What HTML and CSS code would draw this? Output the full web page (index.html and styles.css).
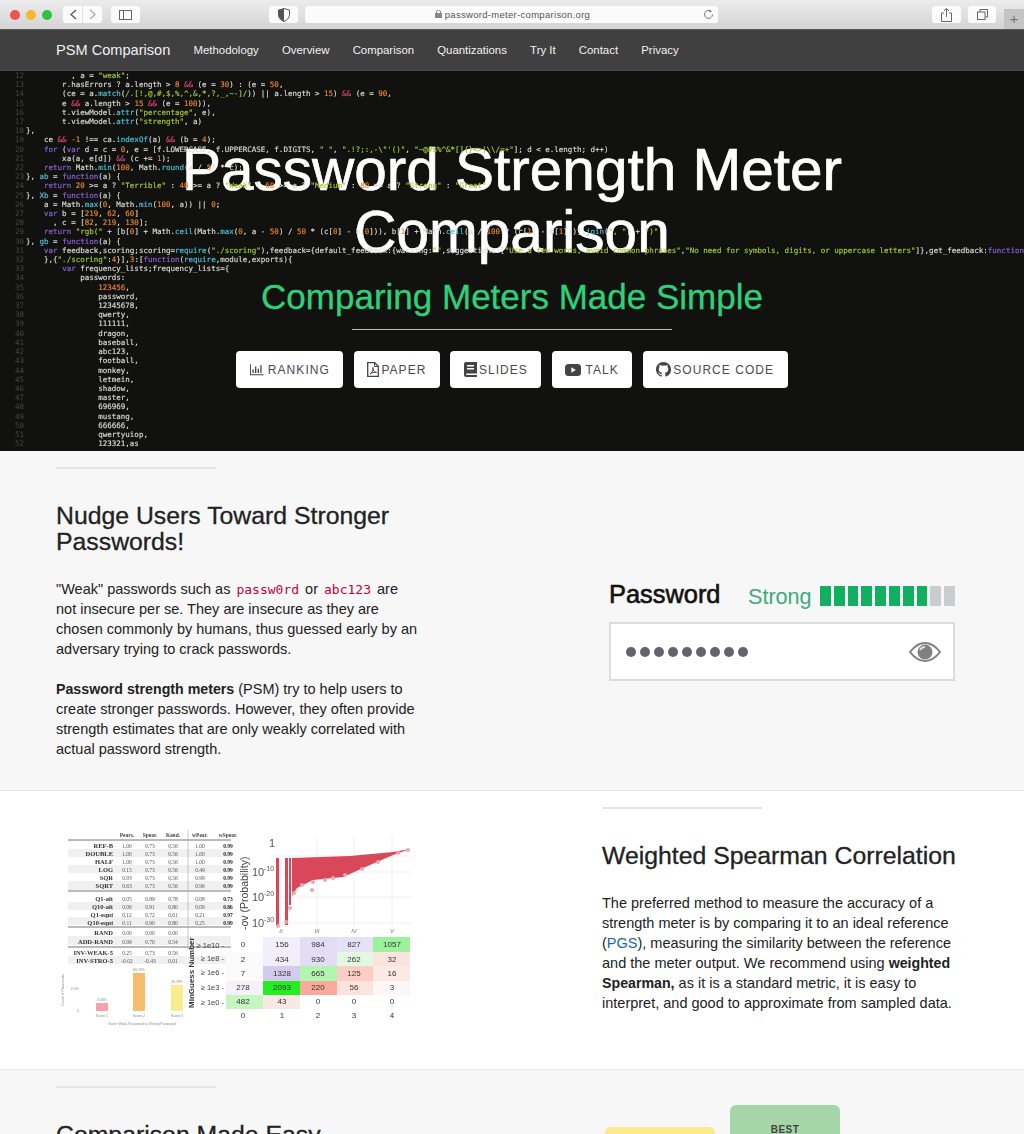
FILE: index.html
```html
<!DOCTYPE html>
<html lang="en">
<head>
    <meta charset="UTF-8">
    <meta name="viewport" content="width=device-width, initial-scale=1.0">
    <title>Password Strength Meter Comparison</title>
    <link rel="stylesheet" href="styles.css">
</head>
<body>

<!-- browser window bar -->
<div class="browser-bar">
    <div class="lights">
        <span class="light light-red"></span>
        <span class="light light-yellow"></span>
        <span class="light light-green"></span>
    </div>
    <div class="tool-btn tool-pair">
        <svg width="39" height="17" viewBox="0 0 39 17"><path d="M13 4l-5 4.500 5 4.500" fill="none" stroke="#555" stroke-width="1.300"/><path d="M27 4l5 4.500-5 4.500" fill="none" stroke="#aaa" stroke-width="1.300"/><path d="M19.500 0v17" stroke="#e2e2e2"/></svg>
    </div>
    <div class="tool-btn tool-side">
        <svg width="13" height="10" viewBox="0 0 13 10"><rect x=".5" y=".5" width="12" height="9" fill="none" stroke="#666"/><path d="M4.500 0v10" stroke="#666"/></svg>
    </div>
    <div class="tool-btn tool-shield">
        <svg width="12" height="14" viewBox="0 0 12 14"><path d="M6 .5l5.500 1.600v4.600c0 3.200-2.400 5.500-5.500 6.800C2.900 12.200.5 9.900.5 6.700V2.100z" fill="#fff" stroke="#555"/><path d="M6 .5v13C2.900 12.200.5 9.900.5 6.700V2.100z" fill="#555"/></svg>
    </div>
    <div class="address">
        <span class="address-text">
            <svg width="7" height="8" viewBox="0 0 7 8"><rect y="3" width="7" height="5" fill="#888"/><path d="M1.500 3V2a2 2 0 014 0v1" fill="none" stroke="#888"/></svg>
            password-meter-comparison.org
        </span>
        <svg class="reload" width="11" height="11" viewBox="0 0 11 11"><path d="M9.500 5.500a4 4 0 11-1.300-3" fill="none" stroke="#777" stroke-width="1"/><path d="M6.500 .5l2.500 2-2.800 1z" fill="#777"/></svg>
    </div>
    <div class="tool-btn tool-share">
        <svg width="11" height="14" viewBox="0 0 11 14"><path d="M3 5H.5v8.500h10V5H8" fill="none" stroke="#666"/><path d="M5.500 9V1M3 3l2.500-2.500L8 3" fill="none" stroke="#666"/></svg>
    </div>
    <div class="tool-btn tool-tabs">
        <svg width="11" height="11" viewBox="0 0 11 11"><rect x=".5" y="3" width="7.500" height="7.500" fill="none" stroke="#666"/><path d="M3 3V.5h7.500V8H8" fill="none" stroke="#666"/></svg>
    </div>
    <div class="new-tab">+</div>
</div>

<nav class="site-nav">
    <a href="#" class="brand">PSM Comparison</a>
    <a href="#">Methodology</a>
    <a href="#">Overview</a>
    <a href="#">Comparison</a>
    <a href="#">Quantizations</a>
    <a href="#">Try It</a>
    <a href="#">Contact</a>
    <a href="#">Privacy</a>
</nav>

<header class="hero">
    <div class="hero-code">
<pre class="gutter">12
13
14
15
16
17
18
19
20
21
22
23
24
25
26
27
28
29
30
31
32
33
34
35
36
37
38
39
40
41
42
43
44
45
46
47
48
49
50
51
52</pre>
<pre class="code">          , a = <i>"weak"</i>;
        r.hasErrors ? a.length &gt; <b>8</b> <u>&amp;&amp;</u> (e = <b>30</b>) : (e = <b>50</b>,
        (ce = a.<em>match</em>(<i>/.[!,@,#,$,%,^,&amp;,*,?,_,~-]/</i>)) || a.length &gt; <b>15</b>) <u>&amp;&amp;</u> (e = <b>90</b>,
        e <u>&amp;&amp;</u> a.length &gt; <b>15</b> <u>&amp;&amp;</u> (e = <b>100</b>)),
        t.viewModel.<em>attr</em>(<i>"percentage"</i>, e),
        t.viewModel.<em>attr</em>(<i>"strength"</i>, a)
},
    ce <u>&amp;&amp;</u> <b>-1</b> !== ca.<em>indexOf</em>(a) <u>&amp;&amp;</u> (b = <b>4</b>);
    <s>for</s> (<s>var</s> d = c = <b>0</b>, e = [f.LOWERCASE, f.UPPERCASE, f.DIGITS, <i>" "</i>, <i>".!?;:,-\"'()"</i>, <i>"~@#$%^&amp;*[]{}&lt;&gt;|\\/=+"</i>]; d &lt; e.length; d++)
        xa(a, e[d]) <u>&amp;&amp;</u> (c += <b>1</b>);
    <s>return</s> Math.<em>min</em>(<b>100</b>, Math.<em>round</em>(a / <b>5</b>) * c);
}, <em>ab</em> = <s>function</s>(a) {
    <s>return</s> <b>20</b> &gt;= a ? <i>"Terrible"</i> : <b>40</b> &gt;= a ? <i>"Weak"</i> : <b>60</b> &gt;= a ? <i>"Medium"</i> : <b>80</b> &gt;= a ? <i>"Strong"</i> : <i>"Great"</i>
}, <em>Xb</em> = <s>function</s>(a) {
    a = Math.<em>max</em>(<b>0</b>, Math.<em>min</em>(<b>100</b>, a)) || <b>0</b>;
    <s>var</s> b = [<b>219</b>, <b>62</b>, <b>60</b>]
      , c = [<b>82</b>, <b>219</b>, <b>130</b>];
    <s>return</s> <i>"rgb("</i> + [b[<b>0</b>] + Math.<em>ceil</em>(Math.<em>max</em>(<b>0</b>, a - <b>50</b>) / <b>50</b> * (c[<b>0</b>] - b[<b>0</b>])), b[<b>1</b>] + Math.<em>ceil</em>(a / <b>100</b> * (c[<b>1</b>] - b[<b>1</b>]))].<em>join</em>(<i>", "</i>) + <i>")"</i>
}, <em>gb</em> = <s>function</s>(a) {
    <s>var</s> feedback,scoring;scoring=<em>require</em>(<i>"./scoring"</i>),feedback={default_feedback:{warning:<i>""</i>,suggestions:[<i>"Use a few words, avoid common phrases"</i>,<i>"No need for symbols, digits, or uppercase letters"</i>]},get_feedback:<s>function</s>
    },{<i>"./scoring"</i>:<b>4</b>}],<b>3</b>:[<s>function</s>(<em>require</em>,module,exports){
        <s>var</s> frequency_lists;frequency_lists={
            passwords:
                <b>123456</b>,
                password,
                12345678,
                qwerty,
                111111,
                dragon,
                baseball,
                abc123,
                football,
                monkey,
                letmein,
                shadow,
                master,
                696969,
                mustang,
                666666,
                qwertyuiop,
                123321,as</pre>
    </div>
    <div class="hero-body">
        <h1>Password Strength Meter Comparison</h1>
        <p class="hero-sub">Comparing Meters Made Simple</p>
        <hr class="hero-rule">
        <div class="hero-buttons">
            <a href="#" class="btn">
                <svg width="14" height="13" viewBox="0 0 16 14"><path d="M.5 1v12h15" fill="none" stroke="#444" stroke-width="1.200"/><path d="M3.500 7v4M6.500 3.500V11M9.500 6v5M12.500 2v9" fill="none" stroke="#444" stroke-width="1.500"/></svg>
                Ranking
            </a>
            <a href="#" class="btn btn-tight">
                <svg width="12" height="15" viewBox="0 0 12 15"><path d="M.7.7h7l3.600 3.600v10H.7z" fill="none" stroke="#444" stroke-width="1.300"/><path d="M7.500.7v3.800h3.800" fill="none" stroke="#444"/><path d="M3 12c2-1 3.500-4 3-6.500C5.500 8 7 10.500 9.500 10.500 7 10 4.500 10.500 3 12z" fill="none" stroke="#444"/></svg>
                Paper
            </a>
            <a href="#" class="btn btn-tight">
                <svg width="13" height="15" viewBox="0 0 13 15"><path d="M2 0h11v11.500H2.500a1 1 0 000 1.500H13v2H2a2 2 0 01-2-2V2a2 2 0 012-2z" fill="#444"/><rect x="3" y="3" width="7" height="1.500" fill="#fff"/><rect x="3" y="6" width="7" height="1.500" fill="#fff"/></svg>
                Slides
            </a>
            <a href="#" class="btn">
                <svg width="16" height="12" viewBox="0 0 16 12"><rect width="16" height="12" rx="3.500" fill="#444"/><path d="M6.300 3.300v5.400L10.800 6z" fill="#fff"/></svg>
                Talk
            </a>
            <a href="#" class="btn btn-tight">
                <svg width="15" height="15" viewBox="0 0 16 16"><path fill="#444" d="M8 0C3.580 0 0 3.580 0 8c0 3.540 2.290 6.530 5.470 7.590.4.070.55-.17.55-.38 0-.19-.01-.82-.01-1.490-2.010.37-2.530-.49-2.690-.94-.09-.23-.48-.94-.82-1.130-.28-.15-.68-.52-.01-.53.63-.01 1.080.58 1.230.82.72 1.210 1.870.87 2.330.66.07-.52.28-.87.51-1.070-1.780-.2-3.640-.89-3.640-3.950 0-.87.31-1.590.82-2.150-.08-.2-.36-1.020.08-2.120 0 0 .67-.21 2.200.82.64-.18 1.320-.27 2-.27.68 0 1.360.09 2 .27 1.530-1.040 2.200-.82 2.200-.82.44 1.100.16 1.920.08 2.120.51.56.82 1.270.82 2.150 0 3.070-1.870 3.750-3.650 3.950.29.25.54.73.54 1.480 0 1.070-.01 1.930-.01 2.200 0 .21.15.46.55.38A8.013 8.013 0 0016 8c0-4.420-3.580-8-8-8z"/></svg>
                Source Code
            </a>
        </div>
    </div>
</header>

<section class="band band-grey band-first">
    <div class="text-col">
        <hr class="short-rule">
        <h2>Nudge Users Toward Stronger Passwords!</h2>
        <p>"Weak" passwords such as <code>passw0rd</code> or <code>abc123</code> are not insecure per se. They are insecure as they are chosen commonly by humans, thus guessed early by an adversary trying to crack passwords.</p>
        <p><strong>Password strength meters</strong> (PSM) try to help users to create stronger passwords. However, they often provide strength estimates that are only weakly correlated with actual password strength.</p>
    </div>
    <div class="meter-demo">
        <div class="meter-head">
            <span class="meter-label">Password</span>
            <span class="meter-word">Strong</span>
            <span class="meter-bars">
                <i class="on"></i><i class="on"></i><i class="on"></i><i class="on"></i><i class="on"></i><i class="on"></i><i class="on"></i><i class="on"></i><i></i><i></i>
            </span>
        </div>
        <div class="meter-input">
            <span class="dots"><i></i><i></i><i></i><i></i><i></i><i></i><i></i><i></i><i></i></span>
            <svg width="32" height="20" viewBox="0 0 32 20"><path d="M1 10C6 3.500 11 1 16 1s10 2.500 15 9c-5 6.500-10 9-15 9S6 16.500 1 10z" fill="none" stroke="#808080" stroke-width="2"/><circle cx="16" cy="10" r="7.500" fill="#808080"/><path d="M11 8a5.500 5.500 0 015-3" fill="none" stroke="#ddd" stroke-width="1.800"/></svg>
        </div>
    </div>
</section>

<section class="band band-white">
    <div class="figure-col">
        <svg class="figure" width="364" height="205" viewBox="56 825 364 205">
            <!-- metric table -->
            <g class="fig-bands">
                <rect x="68" y="849" width="163" height="8"/>
                <rect x="68" y="865" width="163" height="8"/>
                <rect x="68" y="881" width="163" height="9"/>
                <rect x="68" y="902" width="163" height="8"/>
                <rect x="68" y="917" width="163" height="8"/>
                <rect x="68" y="936" width="163" height="9"/>
                <rect x="68" y="956" width="163" height="8"/>
            </g>
            <path class="fig-rule" d="M68 840H231M68 891H231M68 927H231M68 947H231"/>
            <path class="fig-rule-thin" d="M188 830V950"/>
            <g class="fig-head">
                <text x="127" y="837">Pears.</text><text x="150" y="837">Spear.</text><text x="173" y="837">Kend.</text><text x="200" y="837">wPear.</text><text x="228" y="837">wSpear.</text>
            </g>
            <g class="fig-names">
                <text x="113" y="848">REF-B</text><text x="113" y="856">DOUBLE</text><text x="113" y="864">HALF</text><text x="113" y="872">LOG</text><text x="113" y="880">SQR</text><text x="113" y="888">SQRT</text>
                <text x="113" y="901">Q1-alt</text><text x="113" y="909">Q10-alt</text><text x="113" y="917">Q1-equi</text><text x="113" y="925">Q10-equi</text>
                <text x="113" y="935">RAND</text><text x="113" y="944">ADD-RAND</text>
                <text x="113" y="955">INV-WEAK-5</text><text x="113" y="963">INV-STRO-5</text>
            </g>
            <g class="fig-nums">
                <text x="127" y="848">1.00</text><text x="150" y="848">0.73</text><text x="173" y="848">0.56</text><text x="200" y="848">1.00</text><text x="228" y="848" class="fig-strong">0.99</text>
                <text x="127" y="856">1.00</text><text x="150" y="856">0.73</text><text x="173" y="856">0.56</text><text x="200" y="856">1.00</text><text x="228" y="856" class="fig-strong">0.99</text>
                <text x="127" y="864">1.00</text><text x="150" y="864">0.73</text><text x="173" y="864">0.56</text><text x="200" y="864">1.00</text><text x="228" y="864" class="fig-strong">0.99</text>
                <text x="127" y="872">0.15</text><text x="150" y="872">0.73</text><text x="173" y="872">0.56</text><text x="200" y="872">0.49</text><text x="228" y="872" class="fig-strong">0.99</text>
                <text x="127" y="880">0.93</text><text x="150" y="880">0.73</text><text x="173" y="880">0.56</text><text x="200" y="880">0.99</text><text x="228" y="880" class="fig-strong">0.99</text>
                <text x="127" y="888">0.63</text><text x="150" y="888">0.73</text><text x="173" y="888">0.56</text><text x="200" y="888">0.96</text><text x="228" y="888" class="fig-strong">0.99</text>
                <text x="127" y="901">0.05</text><text x="150" y="901">0.89</text><text x="173" y="901">0.78</text><text x="200" y="901">0.08</text><text x="228" y="901" class="fig-strong">0.73</text>
                <text x="127" y="909">0.06</text><text x="150" y="909">0.91</text><text x="173" y="909">0.80</text><text x="200" y="909">0.09</text><text x="228" y="909" class="fig-strong">0.86</text>
                <text x="127" y="917">0.12</text><text x="150" y="917">0.72</text><text x="173" y="917">0.61</text><text x="200" y="917">0.21</text><text x="228" y="917" class="fig-strong">0.97</text>
                <text x="127" y="925">0.11</text><text x="150" y="925">0.90</text><text x="173" y="925">0.80</text><text x="200" y="925">0.25</text><text x="228" y="925" class="fig-strong">0.99</text>
                <text x="127" y="935">0.00</text><text x="150" y="935">0.00</text><text x="173" y="935">0.00</text>
                <text x="127" y="944">0.99</text><text x="150" y="944">0.70</text><text x="173" y="944">0.54</text>
                <text x="127" y="955">0.25</text><text x="150" y="955">0.73</text><text x="173" y="955">0.56</text>
                <text x="127" y="963">-0.02</text><text x="150" y="963">-0.43</text><text x="173" y="963">0.01</text>
            </g>

            <!-- bars -->
            <g class="fig-tiny">
                <text x="64" y="990" transform="rotate(-90 64 990)">Count of Passwords</text>
                <text x="75" y="990">0.5%</text><text x="78" y="1012">0</text>
                <text x="102" y="1001">3.00%</text><text x="139" y="971">66.74%</text><text x="177" y="983">45.79%</text>
                <text x="102" y="1017">Score 1</text><text x="139" y="1017">Score 2</text><text x="177" y="1017">Score 3</text>
                <text x="142" y="1025">Score Weak Password vs Strong Password</text>
            </g>
            <rect x="96" y="1003" width="12" height="8" fill="#f4a3ad"/>
            <rect x="133" y="973" width="12" height="38" fill="#f6bd6f"/>
            <rect x="171" y="985" width="12" height="26" fill="#f9ec8c"/>

            <!-- scatter -->
            <path class="fig-grid" d="M276 856H412M276 872H412M276 897H412M276 923H412M317 836V928M354 836V928M392 836V928"/>
            <path d="M276 858h3v67h-3zM285 858h3v67h-3zM289 858h2v47h-2z" fill="#d9485a"/>
            <path d="M292 858L350 856 393 852 410 849 393 855 370 865 343 877 313 880 297 888 292 896z" fill="#d9485a"/>
            <g fill="#eba6af">
                <circle cx="294" cy="893" r="2"/><circle cx="302" cy="885" r="2"/><circle cx="313" cy="882" r="2"/><circle cx="312" cy="890" r="2"/><circle cx="325" cy="880" r="2"/><circle cx="333" cy="878" r="2"/><circle cx="345" cy="875" r="2"/><circle cx="362" cy="869" r="2"/><circle cx="378" cy="862" r="2"/><circle cx="398" cy="853" r="2"/><circle cx="408" cy="850" r="2"/><circle cx="290" cy="908" r="2"/><circle cx="286" cy="922" r="2"/><circle cx="278" cy="926" r="2"/>
            </g>
            <g class="fig-axis">
                <text x="269" y="847">1</text>
                <text x="252" y="876">10</text><text x="264" y="871" class="fig-exp">-10</text>
                <text x="252" y="901">10</text><text x="264" y="896" class="fig-exp">-20</text>
                <text x="252" y="927">10</text><text x="264" y="922" class="fig-exp">-30</text>
            </g>
            <text class="fig-axis-title" x="248" y="930" transform="rotate(-90 248 930)">-ov (Probability)</text>
            <g class="fig-roman">
                <text x="281" y="933">II</text><text x="317" y="933">III</text><text x="354" y="933">IV</text><text x="392" y="933">V</text>
            </g>

            <!-- heat map -->
            <g>
                <rect x="263" y="937" width="37" height="15" fill="#f3effa"/><rect x="300" y="937" width="37" height="15" fill="#e2dcf4"/><rect x="337" y="937" width="36" height="15" fill="#e6e1f6"/><rect x="373" y="937" width="37" height="15" fill="#9cf29c"/>
                <rect x="226" y="952" width="37" height="14" fill="#fbfbfb"/><rect x="263" y="952" width="37" height="14" fill="#f1edf9"/><rect x="300" y="952" width="37" height="14" fill="#e3ddf4"/><rect x="337" y="952" width="36" height="14" fill="#e2f8e0"/><rect x="373" y="952" width="37" height="14" fill="#fbe3de"/>
                <rect x="226" y="966" width="37" height="15" fill="#fbfbfb"/><rect x="263" y="966" width="37" height="15" fill="#d4caed"/><rect x="300" y="966" width="37" height="15" fill="#b2f5ae"/><rect x="337" y="966" width="36" height="15" fill="#fbcdc5"/><rect x="373" y="966" width="37" height="15" fill="#fbe9e6"/>
                <rect x="226" y="981" width="37" height="14" fill="#f4f1fa"/><rect x="263" y="981" width="37" height="14" fill="#22ee22"/><rect x="300" y="981" width="37" height="14" fill="#fba99d"/><rect x="337" y="981" width="36" height="14" fill="#fce3df"/><rect x="373" y="981" width="37" height="14" fill="#fdf6f5"/>
                <rect x="226" y="995" width="37" height="14" fill="#c5f6c0"/><rect x="263" y="995" width="37" height="14" fill="#fbe8e4"/>
            </g>
            <g class="fig-cells">
                <text x="243" y="947">0</text><text x="282" y="947">156</text><text x="318" y="947">984</text><text x="354" y="947">827</text><text x="392" y="947">1057</text>
                <text x="243" y="962">2</text><text x="282" y="962">434</text><text x="318" y="962">930</text><text x="354" y="962">262</text><text x="392" y="962">32</text>
                <text x="243" y="976">7</text><text x="282" y="976">1328</text><text x="318" y="976">665</text><text x="354" y="976">125</text><text x="392" y="976">16</text>
                <text x="243" y="990">278</text><text x="282" y="990">2093</text><text x="318" y="990">220</text><text x="354" y="990">56</text><text x="392" y="990">3</text>
                <text x="243" y="1004">482</text><text x="282" y="1004">43</text><text x="318" y="1004">0</text><text x="354" y="1004">0</text><text x="392" y="1004">0</text>
                <text x="243" y="1018">0</text><text x="282" y="1018">1</text><text x="318" y="1018">2</text><text x="354" y="1018">3</text><text x="392" y="1018">4</text>
            </g>
            <g class="fig-rows">
                <text x="224" y="948">≥ 1e10 -</text><text x="224" y="961">≥ 1e8 -</text><text x="224" y="975">≥ 1e6 -</text><text x="224" y="990">≥ 1e3 -</text><text x="224" y="1005">≥ 1e0 -</text>
            </g>
            <text class="fig-min" x="194" y="1008" transform="rotate(-90 194 1008)">MinGuess Number</text>
        </svg>
    </div>
    <div class="text-col">
        <hr class="short-rule">
        <h2>Weighted Spearman Correlation</h2>
        <p>The preferred method to measure the accuracy of a strength meter is by comparing it to an ideal reference (<a href="#">PGS</a>), measuring the similarity between the reference and the meter output. We recommend using <strong>weighted Spearman,</strong> as it is a standard metric, it is easy to interpret, and good to approximate from sampled data.</p>
    </div>
</section>

<section class="band band-grey band-last">
    <div class="text-col">
        <hr class="short-rule">
        <h2>Comparison Made Easy</h2>
    </div>
    <div class="rank-cards">
        <div class="rank-card rank-yellow"></div>
        <div class="rank-card rank-green">BEST</div>
    </div>
</section>

</body>
</html>
```

FILE: styles.css
```css
html, body {
    height: 1134px;
    overflow: hidden;
}

body {
    margin: 0;
    font-family: 'Liberation Sans', Arial, sans-serif;
    color: #222;
    background-color: #fff;
}

/* browser bar */
.browser-bar {
    height: 29px;
    display: flex;
    align-items: center;
    padding-left: 10px;
    background: linear-gradient(#ececec, #d4d4d4);
    border-bottom: 1px solid #5a5a5a;
}

.lights {
    display: flex;
    gap: 6px;
    width: 53px;
}

.light {
    width: 10px;
    height: 10px;
    border-radius: 50%;
}

.light-red { background-color: #ef5350; }
.light-yellow { background-color: #f4b92f; }
.light-green { background-color: #2fc141; }

.tool-btn {
    height: 17px;
    display: flex;
    align-items: center;
    justify-content: center;
    background-color: #fbfbfb;
    border-radius: 3px;
}

.tool-pair { width: 39px; }
.tool-side { width: 29px; margin-left: 9px; }
.tool-shield { width: 29px; margin-left: 129px; }
.tool-share { width: 29px; margin-left: 214px; }
.tool-tabs { width: 28px; margin-left: 7px; }

.address {
    width: 413px;
    height: 17px;
    margin-left: 7px;
    position: relative;
    display: flex;
    align-items: center;
    justify-content: center;
    background-color: #fbfbfb;
    border-radius: 3px;
    font-size: 9.500px;
    letter-spacing: 0.3px;
    color: #555;
}

.address-text {
    margin-left: 2px;
}

.reload {
    position: absolute;
    right: 4px;
    top: 3px;
}

.new-tab {
    width: 20px;
    height: 20px;
    margin-left: 8px;
    background-color: #c4c4c4;
    color: #777;
    font-size: 15px;
    line-height: 20px;
    text-align: center;
    align-self: flex-end;
}

/* nav */
.site-nav {
    height: 40px;
    display: flex;
    align-items: center;
    gap: 23.200px;
    padding-left: 56px;
    background-color: #404040;
    border-bottom: 1px solid #4b4b46;
}

.site-nav a {
    color: #f0f0f0;
    text-decoration: none;
    font-size: 11.400px;
}

.site-nav .brand {
    font-size: 14.600px;
}

/* hero */
.hero {
    height: 380px;
    display: grid;
    background-color: #11110f;
    overflow: hidden;
}

.hero-code,
.hero-body {
    grid-area: 1 / 1;
    min-width: 0;
}

.hero-code {
    display: flex;
    filter: blur(0.5px);
    color: #dcdcd6;
    overflow: hidden;
}

.hero-code pre {
    margin: 0;
    font-family: 'DejaVu Sans Mono', monospace;
    font-size: 7.500px;
    line-height: 9.200px;
}

.code {
    -webkit-text-stroke: 0.15px currentColor;
}

.gutter {
    width: 26px;
    flex-shrink: 0;
    padding-left: 15px;
    box-sizing: border-box;
    color: #45453f;
}

.code i { font-style: normal; color: #a3c93a; }
.code b { font-weight: normal; color: #e8862c; }
.code u { text-decoration: none; color: #e0457b; }
.code s { text-decoration: none; color: #8d64d8; }
.code em { font-style: normal; color: #4fc3d9; }

.hero-body {
    display: flex;
    flex-direction: column;
    align-items: center;
    padding-top: 68px;
}

.hero h1 {
    width: 720px;
    margin: 0;
    text-align: center;
    color: #fff;
    font-size: 58.500px;
    font-weight: normal;
    line-height: 62px;
    -webkit-text-stroke: 0.7px #fff;
}

.hero-sub {
    margin: 13px 0 0;
    color: #2fd07a;
    font-size: 35px;
    line-height: 42px;
    -webkit-text-stroke: 0.3px #2fd07a;
}

.hero-rule {
    width: 320px;
    height: 1px;
    margin: 11px 0 21px;
    border: 0;
    background-color: #bdbdb8;
}

.hero-buttons {
    display: flex;
    gap: 10.500px;
}

.btn {
    height: 37px;
    display: flex;
    align-items: center;
    gap: 4px;
    padding: 0 13.500px;
    background-color: #fff;
    border-radius: 4px;
    color: #4a4a4a;
    text-decoration: none;
    text-transform: uppercase;
    font-size: 12px;
    letter-spacing: 1.050px;
}

.btn-tight {
    gap: 2px;
}

/* content bands */
.band {
    display: grid;
    grid-template-columns: 364px 354px;
    justify-content: space-between;
    padding: 0 68px 0 56px;
    overflow: hidden;
}

.band-grey {
    background-color: #f7f7f7;
}

.band-white {
    height: 278px;
    background-color: #fff;
}

.band-first {
    height: 339px;
    border-bottom: 1px solid #e6e6e6;
    align-items: start;
}

.band-last {
    height: 70px;
    border-top: 1px solid #ececec;
}

.short-rule {
    width: 160px;
    height: 2px;
    margin: 16px 0 0;
    border: 0;
    background-color: #e4e4e4;
}

.text-col {
    font-size: 14.500px;
    line-height: 20px;
}

.text-col h2 {
    margin: 34px 0 24px;
    font-size: 24.800px;
    font-weight: normal;
    line-height: 26px;
    color: #222;
    -webkit-text-stroke: 0.3px #222;
}

.text-col p {
    margin: 0 0 20px;
}

.text-col a {
    color: #1666b0;
    text-decoration: none;
}

.text-col strong {
    font-size: 14.200px;
}

code {
    padding: 0 2px;
    font-family: 'DejaVu Sans Mono', monospace;
    font-size: 13px;
    line-height: 1;
    color: #c2003a;
}

/* meter demo */
.meter-demo {
    margin: 127px 0 0 7px;
    width: 346px;
}

.meter-head {
    display: flex;
    align-items: center;
    height: 36px;
}

.meter-label {
    flex: none;
    width: 139px;
    margin-bottom: 4px;
    font-size: 25.400px;
    color: #111;
    -webkit-text-stroke: 0.6px #111;
}

.meter-word {
    flex: none;
    width: 72px;
    margin-top: 2px;
    font-size: 21.600px;
    color: #3dab7a;
}

.meter-bars {
    display: flex;
    gap: 3px;
}

.meter-bars i {
    width: 10.800px;
    height: 20px;
    background-color: #cbcbd2;
}

.meter-bars .on {
    background-color: #10b060;
}

.meter-input {
    height: 55px;
    margin-top: 8px;
    display: flex;
    align-items: center;
    justify-content: space-between;
    padding: 0 12px 0 15px;
    background-color: #fff;
    border: 2px solid #dcdcdc;
}

.dots {
    display: flex;
    gap: 4px;
}

.dots i {
    width: 10px;
    height: 10px;
    border-radius: 50%;
    background-color: #63636f;
}

/* figure */
.figure-col {
    padding-top: 34px;
}

.figure {
    display: block;
    filter: blur(0.35px);
}

.figure text {
    font-family: 'Liberation Sans', Arial, sans-serif;
}

.fig-bands rect { fill: #f0f0f0; }
.fig-rule { fill: none; stroke: #777; stroke-width: 1; }
.fig-rule-thin { fill: none; stroke: #aaa; stroke-width: 0.6; }
.fig-grid { fill: none; stroke: #f0f0f0; stroke-width: 1; }

.figure .fig-head text,
.figure .fig-names text,
.figure .fig-nums text {
    font-family: 'Liberation Serif', serif;
}

.fig-head text { font-size: 5.500px; font-weight: bold; text-anchor: middle; fill: #444; }
.fig-names text { font-size: 6.500px; font-weight: bold; text-anchor: end; fill: #333; }
.fig-nums text { font-size: 5.500px; text-anchor: middle; fill: #555; }
.fig-nums .fig-strong { font-weight: bold; fill: #222; }
.fig-tiny text { font-size: 3.500px; text-anchor: middle; fill: #888; }
.fig-axis text { font-size: 11px; fill: #555; }
.fig-axis .fig-exp { font-size: 7px; }
.fig-axis-title { font-size: 10.500px; fill: #444; }
.fig-roman text { font-size: 6px; text-anchor: middle; fill: #777; font-style: italic; }
.fig-cells text { font-size: 8px; text-anchor: middle; fill: #333; }
.fig-rows text { font-size: 7.500px; text-anchor: end; fill: #444; }
.fig-min { font-size: 8px; font-weight: bold; fill: #333; }

/* cards cut off by the window */
.rank-cards {
    display: flex;
    align-items: flex-start;
    gap: 15px;
    padding: 35px 0 0 3px;
}

.rank-card {
    width: 110px;
    height: 80px;
    border-radius: 6px;
}

.rank-yellow {
    margin-top: 22px;
    background-color: #fbe98f;
}

.rank-green {
    background-color: #a5d6a7;
    padding-top: 19px;
    box-sizing: border-box;
    text-align: center;
    font-size: 10px;
    font-weight: bold;
    letter-spacing: 0.5px;
    color: #444;
}
```
